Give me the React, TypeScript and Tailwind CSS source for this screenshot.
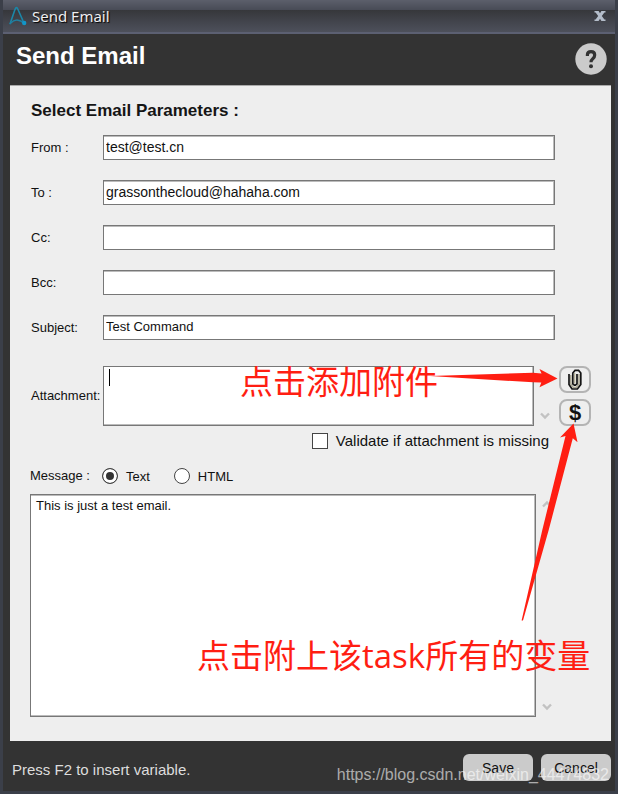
import { useState, type ReactNode } from "react";

const inputClass =
  "min-w-0 flex-1 h-[25px] bg-white border border-[#777] shadow-[inset_0_1px_0_#bbb,inset_-1px_0_0_#bbb] px-0.5 pb-0.5 outline-none";

const fields = [
  { id: "from", label: "From :", value: "test@test.cn", size: "text-[14px]" },
  { id: "to", label: "To :", value: "grassonthecloud@hahaha.com", size: "text-[14px]" },
  { id: "cc", label: "Cc:", value: "", size: "text-[14px]" },
  { id: "bcc", label: "Bcc:", value: "", size: "text-[14px]" },
  { id: "subject", label: "Subject:", value: "Test Command", size: "text-[13px]" },
];

function Logo() {
  return (
    <svg className="w-[18px] h-5 shrink-0" viewBox="0 0 18 20" fill="none" strokeLinecap="round">
      <path d="M1.2 17.5 L5.8 4 Q7.3 -0.5 9 3.5 L14.5 16" stroke="#1b87a8" strokeWidth="1.6" />
      <path d="M1.2 17.5 Q5 13.6 9 14.2 Q12 14.6 14 16.5" stroke="#1f7fa0" strokeWidth="1.5" />
      <circle cx="15.2" cy="17" r="2.2" fill="#1296c8" />
    </svg>
  );
}

function HelpIcon() {
  return (
    <svg className="w-8 h-8" viewBox="0 0 32 32">
      <circle cx="16" cy="16" r="15.7" fill="#cbcbcb" />
      <path
        d="M12.4 13 V11.8 Q12.4 8.6 16 8.6 Q19.7 8.6 19.7 12 Q19.7 14.2 17.8 15.7 Q16 17.2 16 19.2"
        fill="none"
        stroke="#333"
        strokeWidth="3.2"
      />
      <circle cx="16" cy="23.3" r="2" fill="#333" />
    </svg>
  );
}

function ClipIcon() {
  return (
    <svg className="w-4 h-[22px]" viewBox="0 0 16 22" fill="none">
      <path d="M3.8 6 V15 L6.2 18.4 H9.4 L12 15 V5" stroke="#a9a58f" strokeWidth="1.4" />
      <path d="M7.6 4 V14.5" stroke="#b9b49a" strokeWidth="1.4" />
      <path
        d="M2 5 V15.5 L5 20 H10.4 L13.8 15.5 V4 L11.6 1.4 H8 L5.8 4 V14.8 L7.4 16.2 H8.4 L10 14.8 V5"
        stroke="#151515"
        strokeWidth="1.7"
      />
    </svg>
  );
}

function Chevron({ up = false }: { up?: boolean }) {
  return (
    <svg className="w-2.5 h-2" viewBox="0 0 10 8" fill="none" stroke="#c2c2c2" strokeWidth="2.4">
      <path d={up ? "M1 6.5 L5 2.5 L9 6.5" : "M1 1.5 L5 5.5 L9 1.5"} />
    </svg>
  );
}

function SmallButton({ label, children }: { label: string; children: ReactNode }) {
  return (
    <button
      aria-label={label}
      className="w-8 h-[27px] flex items-center justify-center rounded-lg border-2 border-[#b4b4b4] bg-[#eee] text-[22px] leading-none font-bold text-[#111]"
    >
      {children}
    </button>
  );
}

function FormatRadio({ value, current, onPick }: { value: string; current: string; onPick: (v: string) => void }) {
  return (
    <label className="flex items-center gap-2">
      <input
        type="radio"
        name="format"
        checked={current === value}
        onChange={() => onPick(value)}
        className="appearance-none w-4 h-4 rounded-full border border-[#444] bg-white checked:bg-[#333] checked:shadow-[inset_0_0_0_3px_#fff]"
      />
      <span className="pt-0.5">{value}</span>
    </label>
  );
}

function Notes() {
  return (
    <div className="absolute top-0 -right-[3px] w-[618px] h-full pointer-events-none text-[#ff1e12] text-[33px] leading-10 whitespace-nowrap font-['Open_Sans','Noto_Sans_CJK_SC',sans-serif]">
      <svg className="absolute top-0 left-0 w-[618px] h-[794px]" viewBox="0 0 618 794" fill="#ff1e12">
        <path d="M430 376 L533 372.8 L541.5 373.4 L539.5 369 L557.5 378.5 L539.5 387.3 L541.3 382.4 L533 382.3 Z" />
        <path d="M573.5 423.5 L577.5 442.3 L572.8 438.2 L548.7 530 L523 620.5 L521.6 620.5 L542.3 530 L565.5 436 L560 437.5 Z" />
      </svg>
      <p className="absolute top-[362px] left-[240px]">点击添加附件</p>
      <p className="absolute top-[636px] left-[197px]">点击附上该task所有的变量</p>
      <p className="absolute top-[765px] right-[9px] text-[16px] leading-5 text-white/60 font-['Liberation_Sans',sans-serif]">
        https://blog.csdn.net/weixin_44474832
      </p>
    </div>
  );
}

export default function App() {
  const [format, setFormat] = useState("Text");

  return (
    <div className="relative min-h-screen flex flex-col bg-[#333] border-x-[3px] border-b-[3px] border-[#3b3f49] text-[13px] leading-4 text-[#111] font-['Liberation_Sans',Arial,sans-serif]">
      <div className="h-[34px] flex items-center pl-1.5 pr-[7px] border-b-2 border-[#5c6072] bg-[linear-gradient(#5c5f6b_0px,#484b56_10px,#36373b_10px,#4d505b_32px)]">
        <Logo />
        <h2 className="ml-[5px] mr-auto text-[15px] leading-5 text-[#eee] font-['Noto_Sans',sans-serif] [text-shadow:1px_1px_1px_#000]">
          Send Email
        </h2>
        <button aria-label="Close" className="w-4 h-4">
          <svg className="w-4 h-4" viewBox="0 0 16 16" fill="#b4bdca">
            <path d="M2.5 3 H6.6 L8 5.3 L9.4 3 H13.5 V4.5 H12.4 L9.8 8 L12.4 11.5 H13.5 V13 H9.4 L8 10.7 L6.6 13 H2.5 V11.5 H3.6 L6.2 8 L3.6 4.5 H2.5 Z" />
          </svg>
        </button>
      </div>

      <header className="h-[51px] flex items-center justify-between pl-[13px] pr-2">
        <h1 className="pb-2 text-[24px] leading-7 font-bold text-white">Send Email</h1>
        <button aria-label="Help" className="pb-0.5">
          <HelpIcon />
        </button>
      </header>

      <main className="ml-[7px] mr-1 pt-4 px-5 pb-6 bg-[#eee] shadow-[inset_0_1px_0_#aaa]">
        <h3 className="h-5 pl-px text-[17px] leading-5 font-bold text-[#151515]">Select Email Parameters :</h3>

        <div className="mt-3.5 mr-9 flex flex-col gap-5">
          {fields.map((f) => (
            <div key={f.id} className="flex items-center">
              <label htmlFor={f.id} className="w-[73px] shrink-0 pl-px">
                {f.label}
              </label>
              <input id={f.id} defaultValue={f.value} className={`${inputClass} ${f.size}`} />
            </div>
          ))}
        </div>

        <div className="mt-[26px] flex items-center">
          <label htmlFor="attachment" className="w-[73px] shrink-0 pl-px">
            Attachment:
          </label>
          <div className="relative flex-1 flex">
            <textarea
              id="attachment"
              className="w-full h-[60px] resize-none bg-white border border-[#777] shadow-[inset_-1px_-1px_0_#bbb] outline-none"
            />
            <span className="absolute top-[3px] left-[6px] w-px h-[17px] bg-black" />
          </div>
          <div className="w-[25px] h-[60px] flex flex-col justify-end pl-1.5 pb-1.5">
            <Chevron />
          </div>
          <div className="flex flex-col gap-1.5">
            <SmallButton label="Add attachment">
              <ClipIcon />
            </SmallButton>
            <SmallButton label="Insert variable">$</SmallButton>
          </div>
        </div>

        <label className="mt-1 h-[22px] pr-[42px] flex items-center justify-end gap-2 text-[15px]">
          <input type="checkbox" className="appearance-none w-4 h-4 border border-[#444] bg-white checked:bg-[#333]" />
          Validate if attachment is missing
        </label>

        <div className="mt-3.5 h-5 flex items-center">
          <label htmlFor="message" className="w-[72px]">
            Message :
          </label>
          <div className="flex gap-6">
            <FormatRadio value="Text" current={format} onPick={setFormat} />
            <FormatRadio value="HTML" current={format} onPick={setFormat} />
          </div>
        </div>

        <div className="mt-2 mr-[33px] flex">
          <textarea
            id="message"
            defaultValue="This is just a test email."
            className="flex-1 h-[223px] resize-none bg-white border border-[#777] shadow-[inset_0_1px_0_#bbb,inset_-1px_-1px_0_#bbb] px-[5px] py-[3px] outline-none"
          />
          <div className="w-[22px] flex flex-col justify-between pl-1.5 py-1.5">
            <Chevron up />
            <Chevron />
          </div>
        </div>
      </main>

      <footer className="h-[49px] flex items-center gap-2 pl-[9px] pr-1 pt-1">
        <p className="mr-auto pt-1 text-[15px] text-[#ddd]">Press F2 to insert variable.</p>
        <button className="w-[70px] h-[27px] rounded-md bg-[#cbcbcb] text-[14px]">Save</button>
        <button className="w-[70px] h-[27px] rounded-md bg-[#cbcbcb] text-[14px]">Cancel</button>
      </footer>

      <Notes />
    </div>
  );
}
